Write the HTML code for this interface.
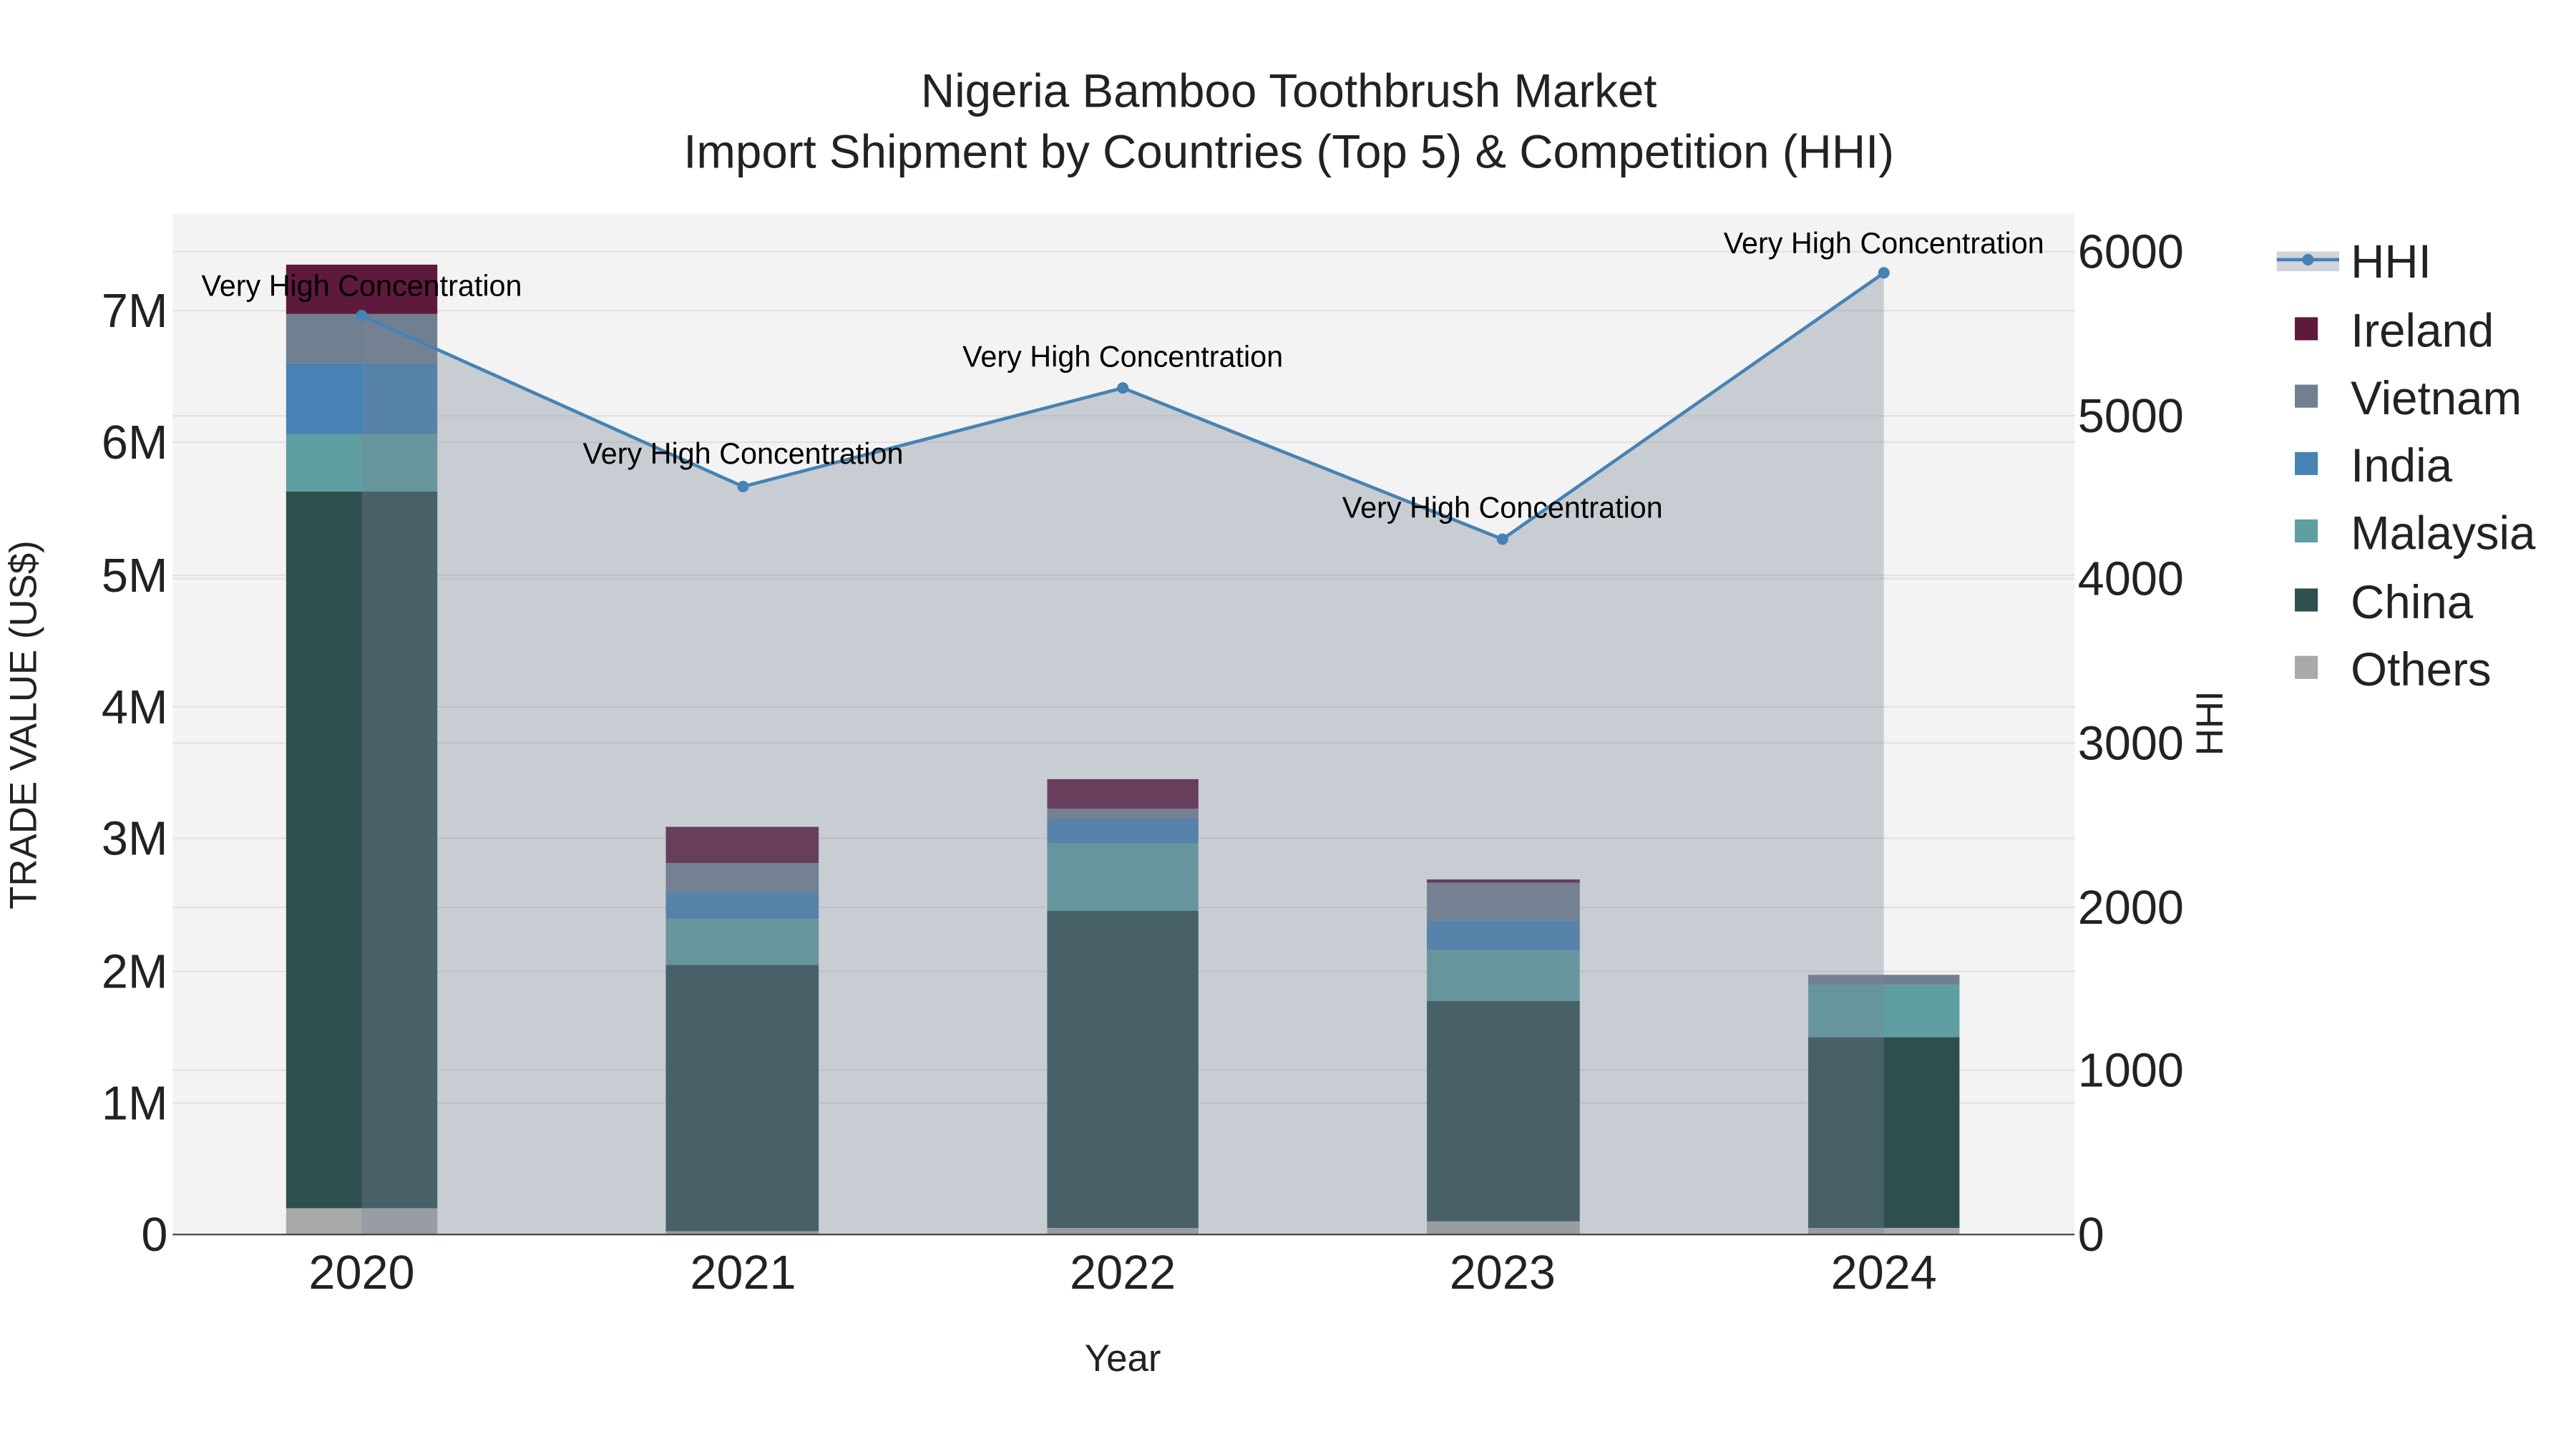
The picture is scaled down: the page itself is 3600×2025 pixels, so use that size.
<!DOCTYPE html>
<html><head><meta charset="utf-8"><style>
html,body{margin:0;padding:0;background:#fff;}
svg{display:block;}
text{font-family:"Liberation Sans",sans-serif;}
</style></head><body>
<svg width="3600" height="2025" viewBox="0 0 1567 881.5" xmlns="http://www.w3.org/2000/svg">
<rect width="1567" height="881.5" fill="#fff"/>
<rect x="105" y="130" width="1157" height="621" fill="#f3f3f3"/>
<g stroke="#e2e2e2" stroke-width="1">
<line x1="105" x2="1262" y1="671" y2="671"/><line x1="105" x2="1262" y1="591" y2="591"/>
<line x1="105" x2="1262" y1="510" y2="510"/><line x1="105" x2="1262" y1="430" y2="430"/>
<line x1="105" x2="1262" y1="350" y2="350"/><line x1="105" x2="1262" y1="269" y2="269"/>
<line x1="105" x2="1262" y1="189" y2="189"/>
<line x1="105" x2="1262" y1="651" y2="651"/><line x1="105" x2="1262" y1="552" y2="552"/>
<line x1="105" x2="1262" y1="452" y2="452"/><line x1="105" x2="1262" y1="352" y2="352"/>
<line x1="105" x2="1262" y1="253" y2="253"/><line x1="105" x2="1262" y1="153" y2="153"/>
</g>
<g>
<rect x="174" y="735" width="92" height="16" fill="#a9a9a9"/>
<rect x="174" y="299" width="92" height="436" fill="#2f4f4f"/>
<rect x="174" y="264" width="92" height="35" fill="#5f9ea0"/>
<rect x="174" y="221" width="92" height="43" fill="#4682b4"/>
<rect x="174" y="191" width="92" height="30" fill="#708090"/>
<rect x="174" y="161" width="92" height="30" fill="#5e1a3c"/>

<rect x="405" y="749" width="93" height="2" fill="#a9a9a9"/>
<rect x="405" y="587" width="93" height="162" fill="#2f4f4f"/>
<rect x="405" y="559" width="93" height="28" fill="#5f9ea0"/>
<rect x="405" y="543" width="93" height="16" fill="#4682b4"/>
<rect x="405" y="525" width="93" height="18" fill="#708090"/>
<rect x="405" y="503" width="93" height="22" fill="#5e1a3c"/>

<rect x="637" y="747" width="92" height="4" fill="#a9a9a9"/>
<rect x="637" y="554" width="92" height="193" fill="#2f4f4f"/>
<rect x="637" y="513" width="92" height="41" fill="#5f9ea0"/>
<rect x="637" y="498" width="92" height="15" fill="#4682b4"/>
<rect x="637" y="492" width="92" height="6" fill="#708090"/>
<rect x="637" y="474" width="92" height="18" fill="#5e1a3c"/>

<rect x="868" y="743" width="93" height="8" fill="#a9a9a9"/>
<rect x="868" y="609" width="93" height="134" fill="#2f4f4f"/>
<rect x="868" y="578" width="93" height="31" fill="#5f9ea0"/>
<rect x="868" y="560" width="93" height="18" fill="#4682b4"/>
<rect x="868" y="537" width="93" height="23" fill="#708090"/>
<rect x="868" y="535" width="93" height="2" fill="#5e1a3c"/>

<rect x="1100" y="747" width="92" height="4" fill="#a9a9a9"/>
<rect x="1100" y="631" width="92" height="116" fill="#2f4f4f"/>
<rect x="1100" y="599" width="92" height="32" fill="#5f9ea0"/>
<rect x="1100" y="593" width="92" height="6" fill="#708090"/>
</g>
<polygon points="220,751 220,192 452,296 683,236 914,328 1146,166 1146,751" fill="rgba(119,133,152,0.35)"/>
<line x1="105" x2="1262" y1="751" y2="751" stroke="#444" stroke-width="1"/>
<polyline points="220,192 452,296 683,236 914,328 1146,166" fill="none" stroke="#4682b4" stroke-width="2"/>
<g fill="#4682b4"><circle cx="220" cy="192" r="3.5"/><circle cx="452" cy="296" r="3.5"/><circle cx="683" cy="236" r="3.5"/><circle cx="914" cy="328" r="3.5"/><circle cx="1146" cy="166" r="3.5"/></g>
<g font-size="18" fill="#000" text-anchor="middle">
<text x="220" y="180">Very High Concentration</text>
<text x="452" y="282">Very High Concentration</text>
<text x="683" y="223">Very High Concentration</text>
<text x="914" y="315">Very High Concentration</text>
<text x="1146" y="154">Very High Concentration</text>
</g>
<g font-size="28.5" fill="#222" text-anchor="middle">
<text x="784" y="65">Nigeria Bamboo Toothbrush Market</text>
<text x="784" y="102">Import Shipment by Countries (Top 5) &amp; Competition (HHI)</text>
</g>
<g font-size="29" fill="#222" text-anchor="end">
<text x="102" y="761">0</text><text x="102" y="681">1M</text><text x="102" y="601">2M</text>
<text x="102" y="520">3M</text><text x="102" y="440">4M</text><text x="102" y="360">5M</text>
<text x="102" y="279">6M</text><text x="102" y="199">7M</text>
</g>
<g font-size="29" fill="#222" text-anchor="start">
<text x="1264" y="761">0</text><text x="1264" y="661">1000</text><text x="1264" y="562">2000</text>
<text x="1264" y="462">3000</text><text x="1264" y="362">4000</text><text x="1264" y="263">5000</text>
<text x="1264" y="163">6000</text>
</g>
<g font-size="29" fill="#222" text-anchor="middle">
<text x="220" y="784">2020</text><text x="452" y="784">2021</text><text x="683" y="784">2022</text>
<text x="914" y="784">2023</text><text x="1146" y="784">2024</text>
</g>
<text x="683" y="834" font-size="23" fill="#222" text-anchor="middle">Year</text>
<text transform="translate(22,441) rotate(-90)" font-size="23" fill="#222" text-anchor="middle">TRADE VALUE (US$)</text>
<text transform="translate(1352,440) rotate(-90)" font-size="23" fill="#222" text-anchor="middle">HHI</text>
<rect x="1385" y="153" width="38" height="12" fill="rgba(119,133,152,0.35)"/>
<line x1="1385" x2="1423" y1="158" y2="158" stroke="#4682b4" stroke-width="2"/>
<circle cx="1404" cy="158" r="3.5" fill="#4682b4"/>
<g font-size="28.5" fill="#222">
<text x="1430" y="169">HHI</text>
<text x="1430" y="211">Ireland</text>
<text x="1430" y="252">Vietnam</text>
<text x="1430" y="293">India</text>
<text x="1430" y="334">Malaysia</text>
<text x="1430" y="376">China</text>
<text x="1430" y="417">Others</text>
</g>
<rect x="1396" y="193" width="14" height="14" fill="#5e1a3c"/>
<rect x="1396" y="234" width="14" height="14" fill="#708090"/>
<rect x="1396" y="275" width="14" height="14" fill="#4682b4"/>
<rect x="1396" y="316" width="14" height="14" fill="#5f9ea0"/>
<rect x="1396" y="358" width="14" height="14" fill="#2f4f4f"/>
<rect x="1396" y="399" width="14" height="14" fill="#a9a9a9"/>
</svg>
</body></html>
